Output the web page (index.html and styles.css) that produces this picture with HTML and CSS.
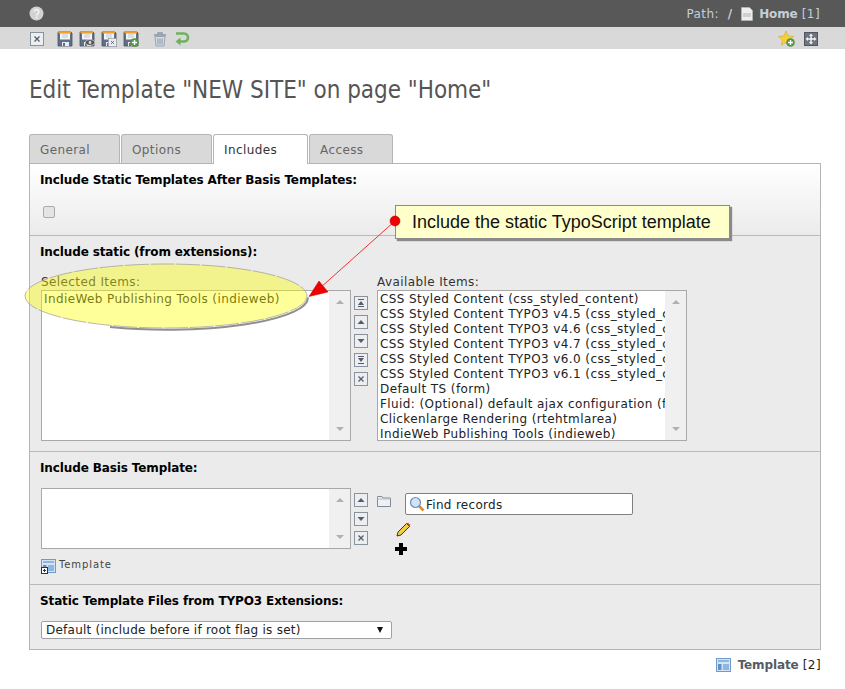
FILE: index.html
```html
<!DOCTYPE html>
<html lang="en">
<head>
<meta charset="utf-8">
<title>Edit Template</title>
<link rel="stylesheet" href="styles.css">
</head>
<body>
<svg class="defs" width="0" height="0" aria-hidden="true">
  <defs>
    <symbol id="floppy" viewBox="0 0 16 16">
      <path d="M1 1h13l1 1v13H1z" fill="#5f7088" stroke="#465368" stroke-width=".8"/>
      <rect x="1.400" y="1" width="12.600" height="1.400" fill="#f0a030"/>
      <rect x="3" y="2.400" width="10" height="6.100" fill="#f2f4f7"/>
      <path d="M5 4h6M5 6h6" stroke="#b4bdc9" stroke-width=".8"/>
      <rect x="5" y="11" width="7" height="4" fill="#e8ebef"/>
      <rect x="6" y="12" width="2" height="3" fill="#5f7088"/>
    </symbol>
    <symbol id="boxx" viewBox="0 0 14 14">
      <rect x=".5" y=".5" width="13" height="13" fill="#eceef2" stroke="#8a929e"/>
      <path d="M4.500 4.500l5 5M9.500 4.500l-5 5" stroke="#565e6a" stroke-width="1.300"/>
    </symbol>
    <symbol id="btop" viewBox="0 0 14 14">
      <rect x=".5" y=".5" width="13" height="13" fill="#eceef2" stroke="#8a929e"/>
      <path d="M4 3.500h6" stroke="#555d69"/><path d="M7 5l3 4H4z" fill="#555d69"/><path d="M4 10.500h6" stroke="#555d69"/>
    </symbol>
    <symbol id="bup" viewBox="0 0 14 14">
      <rect x=".5" y=".5" width="13" height="13" fill="#eceef2" stroke="#8a929e"/>
      <path d="M7 5l3.500 4h-7z" fill="#555d69"/>
    </symbol>
    <symbol id="bdown" viewBox="0 0 14 14">
      <rect x=".5" y=".5" width="13" height="13" fill="#eceef2" stroke="#8a929e"/>
      <path d="M7 9l3.500-4h-7z" fill="#555d69"/>
    </symbol>
    <symbol id="bbottom" viewBox="0 0 14 14">
      <rect x=".5" y=".5" width="13" height="13" fill="#eceef2" stroke="#8a929e"/>
      <path d="M4 3.500h6" stroke="#555d69"/><path d="M7 9l3-4H4z" fill="#555d69"/><path d="M4 10.500h6" stroke="#555d69"/>
    </symbol>
    <symbol id="tmpl" viewBox="0 0 16 16">
      <rect x=".5" y="1.500" width="14" height="13" fill="#d5e4f5" stroke="#6f9bcc"/>
      <rect x="2" y="3" width="11" height="2" fill="#8fb6e0"/>
      <rect x="2" y="7" width="3.500" height="6" fill="#5f90c8"/>
      <rect x="7" y="7" width="6" height="6" fill="#8fb6e0"/>
    </symbol>
  </defs>
</svg>

<header class="topbar">
  <svg class="icon-help" width="15" height="15" viewBox="0 0 15 15"><circle cx="7.500" cy="7.500" r="7" fill="#d2d2d2"/><path d="M5.200 5.800a2.300 2.200 0 1 1 3.600 1.800c-.9.600-1.300 1-1.300 1.900" fill="none" stroke="#f4f4f4" stroke-width="1.600"/><circle cx="7.500" cy="11.500" r="1" fill="#f4f4f4"/></svg>
  <div class="path">
    <span>Path:</span><b class="slash">/</b>
    <svg width="12" height="14" viewBox="0 0 12 14"><path d="M.5.500h8l3 3v10H.5z" fill="#eeeeee" stroke="#bbb" stroke-width=".6"/><path d="M2 6h8v4H2z" fill="#cfcfcf"/></svg>
    <span class="path-page"><b>Home</b> [1]</span>
  </div>
</header>

<nav class="toolbar">
  <div class="tools">
    <svg class="t14"><use href="#boxx"/></svg>
    <div class="tool-group">
      <svg class="t16"><use href="#floppy"/></svg>
      <svg class="t16" viewBox="0 0 16 16"><use href="#floppy" width="16" height="16"/><ellipse cx="11" cy="11.500" rx="4.500" ry="2.800" fill="#555" stroke="#ddd" stroke-width=".7"/><circle cx="11" cy="11.500" r="1.400" fill="#ddd"/></svg>
      <svg class="t16" viewBox="0 0 16 16"><use href="#floppy" width="16" height="16"/><use href="#boxx" x="7" y="7" width="9" height="9"/></svg>
      <svg class="t16" viewBox="0 0 16 16"><use href="#floppy" width="16" height="16"/><circle cx="11.500" cy="11.500" r="4.300" fill="#4f9a3c"/><path d="M11.500 9v5M9 11.500h5" stroke="#fff" stroke-width="1.400"/></svg>
    </div>
    <div class="tool-group">
      <svg class="t16" viewBox="0 0 16 16"><path d="M2 4h12M6 4V2h4v2" fill="none" stroke="#8a97a8" stroke-width="1.300"/><path d="M3 5.500h10l-1 9.500H4z" fill="#d4dae2" stroke="#8a97a8" stroke-width=".8"/><path d="M6 7.500v6M8 7.500v6M10 7.500v6" stroke="#8a97a8"/></svg>
      <svg class="t16" viewBox="0 0 16 16"><path d="M2 2.500h8a4 4 0 0 1 0 8H5" fill="none" stroke="#6cb35c" stroke-width="2.600"/><path d="M6.500 6.500L1.500 10.500l5 4z" fill="#6cb35c"/></svg>
    </div>
  </div>
  <div class="tools-right">
    <svg class="t18" viewBox="0 0 18 18"><path d="M8 1l2.200 5 5.300.5-4 3.500 1.200 5.300L8 12.500 3.300 15.300 4.500 10l-4-3.500L5.800 6z" fill="#f6cf3e" stroke="#d9a820" stroke-width=".6"/><circle cx="12.500" cy="12.500" r="4.300" fill="#4f9a3c"/><path d="M12.500 10v5M10 12.500h5" stroke="#fff" stroke-width="1.400"/></svg>
    <svg class="t14" viewBox="0 0 14 14"><rect x=".5" y=".5" width="13" height="13" fill="#6f757e" stroke="#50565f"/><path d="M7 1.500l2 2.500H5zM7 12.500l2-2.500H5zM1.500 7L4 5v4zM12.500 7L10 5v4z" fill="#f4f4f4"/><path d="M7 3.500v7M3.500 7h7" stroke="#f4f4f4" stroke-width="1.400"/></svg>
  </div>
</nav>

<main class="content">
  <h1 class="title">Edit Template "NEW SITE" on page "Home"</h1>

  <div class="tabs">
    <div class="tab tab-general">General</div>
    <div class="tab tab-options">Options</div>
    <div class="tab tab-active">Includes</div>
    <div class="tab tab-access">Access</div>
  </div>

  <div class="panel">
    <section class="section section-after">
      <h2 class="label">Include Static Templates After Basis Templates:</h2>
      <input class="check" type="checkbox">
    </section>

    <section class="section section-static">
      <h2 class="label">Include static (from extensions):</h2>
      <div class="chooser">
        <div class="column">
          <div class="caption">Selected Items:</div>
          <div class="listbox listbox-tall">
            <ul class="items"><li>IndieWeb Publishing Tools (indieweb)</li></ul>
            <div class="scroller"><i class="arrow-up"></i><i class="arrow-down"></i></div>
          </div>
        </div>
        <div class="buttons">
          <svg class="btn"><use href="#btop"/></svg>
          <svg class="btn"><use href="#bup"/></svg>
          <svg class="btn"><use href="#bdown"/></svg>
          <svg class="btn"><use href="#bbottom"/></svg>
          <svg class="btn"><use href="#boxx"/></svg>
        </div>
        <div class="column">
          <div class="caption">Available Items:</div>
          <div class="listbox listbox-tall">
            <ul class="items">
              <li>CSS Styled Content (css_styled_content)</li>
              <li>CSS Styled Content TYPO3 v4.5 (css_styled_content)</li>
              <li>CSS Styled Content TYPO3 v4.6 (css_styled_content)</li>
              <li>CSS Styled Content TYPO3 v4.7 (css_styled_content)</li>
              <li>CSS Styled Content TYPO3 v6.0 (css_styled_content)</li>
              <li>CSS Styled Content TYPO3 v6.1 (css_styled_content)</li>
              <li>Default TS (form)</li>
              <li>Fluid: (Optional) default ajax configuration (fluid)</li>
              <li>Clickenlarge Rendering (rtehtmlarea)</li>
              <li>IndieWeb Publishing Tools (indieweb)</li>
            </ul>
            <div class="scroller"><i class="arrow-up"></i><i class="arrow-down"></i></div>
          </div>
        </div>
      </div>
    </section>

    <section class="section section-basis">
      <h2 class="label">Include Basis Template:</h2>
      <div class="basis-row">
        <div class="listbox listbox-short">
          <ul class="items"></ul>
          <div class="scroller"><i class="arrow-up"></i><i class="arrow-down"></i></div>
        </div>
        <div class="buttons buttons-basis">
          <svg class="btn"><use href="#bup"/></svg>
          <svg class="btn"><use href="#bdown"/></svg>
          <svg class="btn"><use href="#boxx"/></svg>
        </div>
        <svg class="folder" width="14" height="12" viewBox="0 0 14 12"><path d="M.5 2.500V1.500h4.500l1 1.500h7.500v8.500H.5z" fill="#eef0f4" stroke="#7e8a9a"/><path d="M.5 4h13" stroke="#b5bdc9"/></svg>
        <div class="finder">
          <div class="search">
            <svg width="16" height="16" viewBox="0 0 16 16"><path d="M9.500 9.500l5 5" stroke="#e08a2c" stroke-width="2.600"/><circle cx="6.500" cy="6.500" r="5" fill="#cfe3f7" stroke="#6d8fb5" stroke-width="1.200"/></svg>
            <span>Find records</span>
          </div>
          <svg class="pencil" width="15" height="15" viewBox="0 0 15 15"><path d="M1 14l1-4 8.500-8.500 3 3L5 13z" fill="#f4cd3c" stroke="#222" stroke-width=".9"/><path d="M10.500 1.500l3 3 .8-1.500-2.300-2.300z" fill="#d0402a"/></svg>
          <svg class="plus" width="12" height="12" viewBox="0 0 12 12"><path d="M4 0h4v4h4v4H8v4H4V8H0V4h4z" fill="#000"/></svg>
        </div>
      </div>
      <div class="table-link">
        <svg width="16" height="16" viewBox="0 0 16 16"><use href="#tmpl" width="16" height="16"/><rect x=".5" y="9.500" width="6" height="6" fill="#fff" stroke="#333"/><path d="M2 12.500h3M3.500 11v3" stroke="#333"/></svg>
        <span>Template</span>
      </div>
    </section>

    <section class="section section-files">
      <h2 class="label">Static Template Files from TYPO3 Extensions:</h2>
      <div class="dropdown"><span>Default (include before if root flag is set)</span><i class="dropdown-arrow"></i></div>
    </section>
  </div>

  <footer class="footer">
    <svg width="16" height="16"><use href="#tmpl"/></svg>
    <span class="footer-text"><b>Template</b> [2]</span>
  </footer>
</main>

<svg class="annotation" width="845" height="689" viewBox="0 0 845 689" aria-hidden="true">
  <ellipse class="spot" cx="166" cy="296" rx="141" ry="32"/>
  <path class="spot-shadow" d="M110 327A141 32 0 0 0 308 297.500"/>
  <path class="pointer-line" d="M395 221L320 288"/>
  <path class="pointer-head" d="M309 296.500L319 281L328 292z"/>
  <circle class="pointer-dot" cx="395" cy="221" r="5"/>
</svg>
<div class="callout">Include the static TypoScript template</div>
</body>
</html>
```
FILE: styles.css
```css
* { box-sizing: border-box; }
html, body { margin: 0; padding: 0; }
body {
  position: relative;
  width: 845px;
  height: 689px;
  overflow: hidden;
  background: #fff;
  font-family: "DejaVu Sans", Verdana, sans-serif;
  font-size: 12px;
  letter-spacing: .4px;
  color: #222;
}
.defs { position: absolute; }
svg { display: block; flex: none; }
b { letter-spacing: -.12px; }
.topbar {
  height: 27px;
  background: #585858;
  display: flex;
  align-items: center;
  justify-content: space-between;
  padding: 0 25px 0 29px;
  color: #c5ced8;
  font-size: 12px;
}
.path { display: flex; align-items: center; }
.slash { margin: 0 9px 0 9px; }
.path-page { margin-left: 6px; }
.toolbar {
  height: 22px;
  padding: 2px 27px 0 30px;
  background: #d9d9d9;
  display: flex;
  align-items: center;
  justify-content: space-between;
}
.tools { display: flex; align-items: center; gap: 13px; }
.tool-group { display: flex; align-items: center; gap: 6px; }
.tools-right { display: flex; align-items: center; gap: 8px; }
.t14 { width: 14px; height: 14px; }
.t16 { width: 16px; height: 16px; }
.t18 { width: 18px; height: 18px; }

.content { padding: 0 24px 0 29px; }
.title {
  margin: 0;
  padding: 26px 0 0;
  height: 85px;
  font-family: "DejaVu Sans Condensed", "Liberation Sans Narrow", sans-serif;
  font-size: 24px;
  line-height: 30px;
  letter-spacing: -.03px;
  font-weight: normal;
  color: #555;
}
.tabs { display: flex; height: 29px; gap: 1px; }
.tab {
  height: 29px;
  padding: 7px 0 0 10px;
  background: #d9d9d9;
  border: 1px solid #b5b5b5;
  border-bottom: 0;
  border-radius: 3px 3px 0 0;
  color: #666;
  line-height: 16px;
}
.tab-general { width: 91px; }
.tab-options { width: 91px; }
.tab-active { width: 95px; height: 30px; background: #fff; color: #333; position: relative; z-index: 1; }
.tab-access { width: 84px; }

.panel { border: 1px solid #b5b5b5; background: #ebebeb; height: 487px; }
.section { padding: 9px 10px 0; border-bottom: 1px solid #b9b9b9; }
.section:last-child { border-bottom: 0; }
.label {
  margin: 0;
  font-size: 12px;
  line-height: 15px;
  font-weight: bold;
  letter-spacing: -.12px;
  color: #000;
}
.section-after { height: 72px; background: linear-gradient(#fff, #ebebeb); }
.check {
  display: block;
  width: 12px;
  height: 12px;
  margin: 18px 0 0 3px;
  appearance: none;
  background: #e4e4e4;
  border: 1px solid #aaa;
  border-radius: 2px;
}
.section-static { height: 216px; }
.chooser { display: flex; margin: 15px 0 0 1px; }
.caption { line-height: 15px; color: #333; }
.column { width: 310px; }
.listbox {
  display: flex;
  border: 1px solid #a8a8a8;
  background: #fff;
  width: 310px;
}
.listbox-tall { height: 151px; }
.listbox-short { height: 61px; }
.items {
  list-style: none;
  margin: 0;
  padding: 0 0 0 2px;
  flex: 1;
  min-width: 0;
  overflow: hidden;
}
.items li { line-height: 15px; white-space: nowrap; overflow: hidden; }
.items li:first-child { margin-top: 1px; }
.scroller {
  width: 21px;
  flex: none;
  background: #f0f0f0;
  display: flex;
  flex-direction: column;
  justify-content: space-between;
  align-items: center;
  padding: 9px 0 9px;
}
.arrow-up, .arrow-down { display: block; width: 0; height: 0; border-left: 4px solid transparent; border-right: 4px solid transparent; }
.arrow-up { border-bottom: 4px solid #b0b0b0; }
.arrow-down { border-top: 4px solid #b0b0b0; }
.buttons { width: 26px; padding: 21px 0 0 3px; display: flex; flex-direction: column; gap: 5px; flex: none; }
.btn { width: 14px; height: 14px; }

.section-basis { height: 133px; }
.basis-row { display: flex; margin: 12px 0 0 1px; }
.buttons-basis { padding: 5px 0 0 3px; width: 26px; }
.folder { margin-top: 7px; }
.finder { margin: 5px 0 0 14px; }
.search {
  width: 228px;
  height: 22px;
  display: flex;
  align-items: center;
  gap: 1px;
  padding-left: 3px;
  background: #fff;
  border: 1px solid #808080;
  border-radius: 2px;
  color: #222;
  letter-spacing: .3px;
}
.search span { position: relative; top: 1px; }
.pencil { margin: 7px 0 0 -9px; }
.plus { margin: 6px 0 0 -10px; }
.table-link { display: flex; align-items: center; gap: 2px; margin: 3px 0 0 1px; font-size: 10px; letter-spacing: .9px; color: #444; }
.table-link span { position: relative; top: -2px; }

.section-files { height: 65px; }
.dropdown {
  display: flex;
  justify-content: space-between;
  align-items: center;
  width: 351px;
  height: 18px;
  margin: 12px 0 0 1px;
  padding: 0 8px 0 4px;
  background: #fff;
  border: 1px solid #a0a0a0;
  border-radius: 2px;
  letter-spacing: .24px;
}
.dropdown-arrow { display: block; width: 0; height: 0; border-left: 3px solid transparent; border-right: 3px solid transparent; border-top: 6px solid #111; }

.footer { display: flex; justify-content: flex-end; align-items: center; gap: 6px; margin-top: 7px; }
.footer-text { color: #222; line-height: 16px; }
.footer-text b { color: #565c66; }

.annotation { position: absolute; left: 0; top: 0; pointer-events: none; z-index: 3; }
.spot { fill: #ffff00; fill-opacity: .4; stroke: #9a9a9a; stroke-width: .7; stroke-dasharray: 24 1.500; }
.spot-shadow { fill: none; stroke: #8f8f8f; stroke-width: 2; }
.pointer-line { stroke: #ee3333; stroke-width: 1; fill: none; }
.pointer-head { fill: #f00000; stroke: #c80000; stroke-width: .5; }
.pointer-dot { fill: #f00000; stroke: #a00000; stroke-width: .5; }
.callout {
  position: absolute;
  left: 395px;
  top: 205px;
  width: 335px;
  height: 34px;
  padding-left: 16px;
  background: #ffffcc;
  border: 1px solid #8a8a8a;
  box-shadow: 2px 2px 1px #8a8a8a;
  font-family: "Liberation Sans", Arial, sans-serif;
  font-size: 18px;
  letter-spacing: 0;
  line-height: 32px;
  color: #111;
  z-index: 2;
}
```
